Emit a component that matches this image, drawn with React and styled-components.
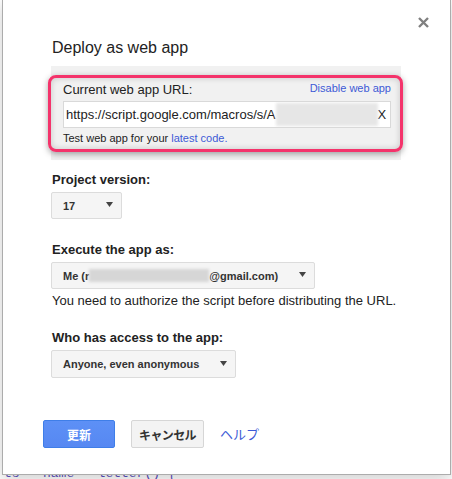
import React from "react";
import styled, { createGlobalStyle } from "styled-components";

const Global = createGlobalStyle`
  html, body { margin: 0; padding: 0; background: #fff; }
  body { font-family: "Liberation Sans", Arial, "Noto Sans CJK JP", sans-serif; color: #222; }
  * { box-sizing: border-box; }
`;

const Page = styled.div`
  width: 452px;
  height: 479px;
  overflow: hidden;
  padding-left: 2px;
  background: #fff;
`;

const Dialog = styled.div`
  position: relative;
  width: 449px;
  height: 475px;
  background: #fff;
  border: 1px solid #acacac;
  border-top: none;
  box-shadow: 0 4px 16px rgba(0, 0, 0, 0.2);
  padding: 38px 0 0 40px;
  display: flex;
  flex-direction: column;
`;

const Close = styled.button`
  position: absolute;
  top: 15px;
  right: 20px;
  width: 14px;
  height: 14px;
  padding: 0;
  border: none;
  background: none;
  display: flex;
  align-items: center;
  justify-content: center;
`;

const Content = styled.div`
  margin-left: 8px;
  display: flex;
  flex-direction: column;
`;

const Title = styled.h1`
  margin: 0 0 8px 1px;
  font-size: 16px;
  line-height: 20px;
  font-weight: normal;
  color: #222;
`;

const UrlBox = styled.div`
  position: relative;
  width: 350px;
  background: #f1f1f1;
  padding: 16px 10px 15px 12px;
  display: flex;
  flex-direction: column;
`;

const Highlight = styled.div`
  position: absolute;
  left: -3px;
  top: 9px;
  width: 355px;
  height: 77px;
  border: 3px solid #f4336b;
  border-radius: 8px;
  box-shadow: 0 2px 6px rgba(0, 0, 0, 0.35), inset 0 0 6px rgba(0, 0, 0, 0.18);
  pointer-events: none;
`;

const UrlHead = styled.div`
  display: flex;
  justify-content: space-between;
  align-items: flex-start;
`;

const UrlLabel = styled.span`
  font-size: 13px;
  line-height: 16px;
  color: #222;
`;

const Link = styled.a`
  color: #3d5ad6;
  text-decoration: none;
  font-size: ${(p) => p.$size || 11}px;
  line-height: ${(p) => p.$lh || 14}px;
  margin-top: ${(p) => p.$mt || 0}px;
  cursor: pointer;
`;

const UrlInput = styled.div`
  margin-top: 3px;
  height: 27px;
  background: #fff;
  border: 1px solid #d9d9d9;
  padding-left: 2px;
  font-size: 13px;
  line-height: 25px;
  white-space: nowrap;
  overflow: hidden;
  display: flex;
  align-items: center;
`;

const Blur = styled.span`
  display: inline-block;
  flex: none;
  width: ${(p) => p.$w}px;
  height: ${(p) => p.$h}px;
  background: ${(p) => p.$bg || "#e3e3e3"};
  filter: blur(1.5px);
`;

const Note = styled.div`
  margin-top: 3px;
  font-size: 11px;
  line-height: 14px;
  color: #222;
`;

const FieldLabel = styled.div`
  margin-top: ${(p) => p.$mt}px;
  font-size: 13px;
  line-height: 16px;
  font-weight: bold;
  color: #222;
  padding-left: 1px;
`;

const Select = styled.div`
  margin-top: 4px;
  width: ${(p) => p.$w}px;
  height: ${(p) => p.$h || 27}px;
  background: #f5f5f5;
  border: 1px solid #dcdcdc;
  border-radius: 2px;
  padding: 0 8px 0 11px;
  display: flex;
  align-items: center;
  justify-content: space-between;
  font-size: 11px;
  font-weight: bold;
  color: #333;
  white-space: nowrap;
`;

const SelectValue = styled.span`
  display: flex;
  align-items: center;
`;

const Help = styled.div`
  margin-top: 4px;
  font-size: 13px;
  line-height: 16px;
  color: #222;
  padding-left: 1px;
`;

const Buttons = styled.div`
  margin-top: 42px;
  display: flex;
  align-items: center;
  gap: 16px;
`;

const Button = styled.button`
  height: 28px;
  width: ${(p) => p.$w}px;
  padding: 0;
  border-radius: 2px;
  font-family: "Liberation Sans", Arial, "Noto Sans CJK JP", sans-serif;
  font-size: 12px;
  font-weight: bold;
  letter-spacing: ${(p) => (p.$tight ? "-0.6px" : "0")};
  color: ${(p) => (p.$primary ? "#fff" : "#333")};
  background: ${(p) => (p.$primary ? "linear-gradient(#5d90f6, #5688f2)" : "#f3f3f3")};
  border: 1px solid ${(p) => (p.$primary ? "#3f7ee8" : "#d6d6d6")};
`;

const HelpLink = styled(Link)`
  font-family: "Noto Sans CJK JP", sans-serif;
`;

const Below = styled.div`
  height: 4px;
  overflow: hidden;
  font-family: "Liberation Mono", monospace;
  font-size: 13px;
  line-height: 13px;
  color: #5a4fc0;
  white-space: pre;
  padding-left: 2px;
`;

const BelowText = styled.div`
  margin-top: -8px;
`;

const Arrow = () => (
  <svg width="7" height="5" viewBox="0 0 7 5" style={{ marginTop: -2 }}>
    <path d="M0 0 H7 L3.5 5 Z" fill="#444" />
  </svg>
);

export default function App() {
  return (
    <>
      <Global />
      <Page>
        <Dialog>
          <Close aria-label="close">
            <svg width="11" height="11" viewBox="0 0 11 11">
              <path d="M1 1 L10 10 M10 1 L1 10" stroke="#808080" strokeWidth="2.4" />
            </svg>
          </Close>
          <Content>
            <Title>Deploy as web app</Title>
            <UrlBox>
              <Highlight />
              <UrlHead>
                <UrlLabel>Current web app URL:</UrlLabel>
                <Link $mt={-1}>Disable web app</Link>
              </UrlHead>
              <UrlInput>
                https://script.google.com/macros/s/A
                <Blur $w={102} $h={23} $bg="#e6e6e6" />
                X
              </UrlInput>
              <Note>
                Test web app for your <Link>latest code.</Link>
              </Note>
            </UrlBox>

            <FieldLabel $mt={12}>Project version:</FieldLabel>
            <Select $w={71}>
              <span>17</span>
              <Arrow />
            </Select>

            <FieldLabel $mt={23}>Execute the app as:</FieldLabel>
            <Select $w={264}>
              <SelectValue>
                Me (r
                <Blur $w={120} $h={13} $bg="#d6d6d6" />
                @gmail.com)
              </SelectValue>
              <Arrow />
            </Select>
            <Help>You need to authorize the script before distributing the URL.</Help>

            <FieldLabel $mt={21}>Who has access to the app:</FieldLabel>
            <Select $w={185} $h={28}>
              <span>Anyone, even anonymous</span>
              <Arrow />
            </Select>
          </Content>
          <Buttons>
            <Button $primary $w={72}>更新</Button>
            <Button $w={73} $tight>キャンセル</Button>
            <HelpLink $size={13} $lh={18}>ヘルプ</HelpLink>
          </Buttons>
        </Dialog>
        <Below>
          <BelowText>{"ts   name   letter() {"}</BelowText>
        </Below>
      </Page>
    </>
  );
}
